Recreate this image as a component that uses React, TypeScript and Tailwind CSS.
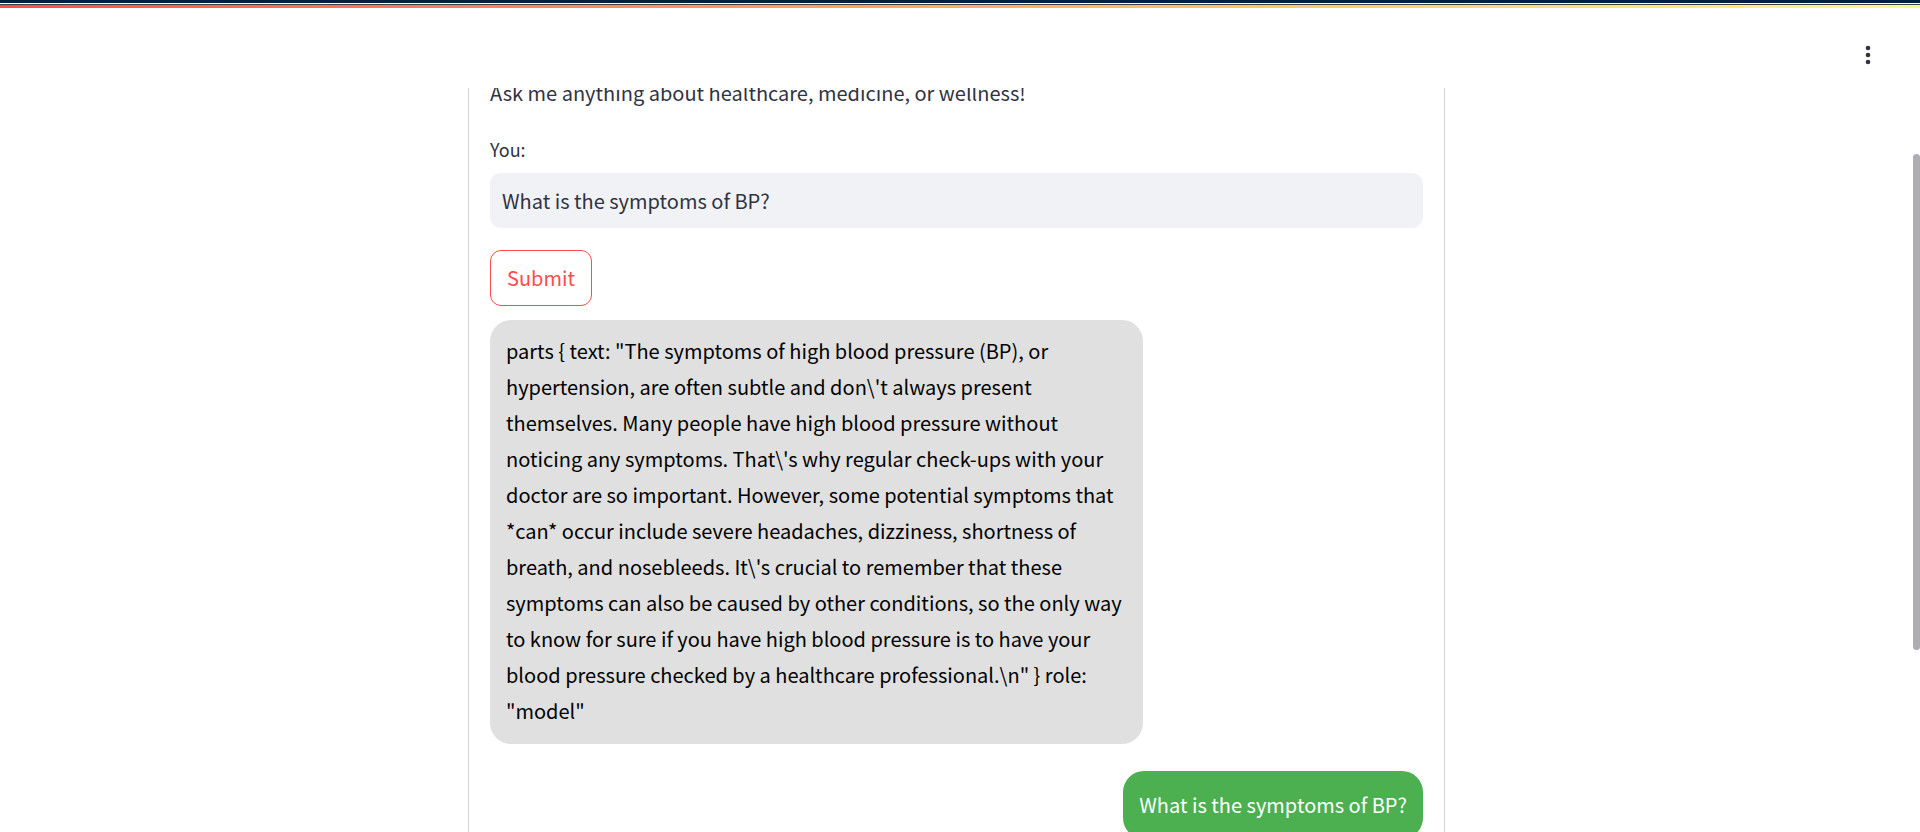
import { useState } from "react";

const reply = String.raw`parts { text: "The symptoms of high blood pressure (BP), or hypertension, are often subtle and don\'t always present themselves. Many people have high blood pressure without noticing any symptoms. That\'s why regular check-ups with your doctor are so important. However, some potential symptoms that *can* occur include severe headaches, dizziness, shortness of breath, and nosebleeds. It\'s crucial to remember that these symptoms can also be caused by other conditions, so the only way to know for sure if you have high blood pressure is to have your blood pressure checked by a healthcare professional.\n" } role: "model"`;

export default function App() {
  const [question, setQuestion] = useState("What is the symptoms of BP?");

  return (
    <div className="flex h-screen flex-col overflow-hidden bg-white font-['Source_Sans_Pro','Noto_Sans_CJK_SC',sans-serif] text-[20px] leading-9 text-[#31333f]">
      <div className="h-[3px] shrink-0 bg-[#02203f]" />
      <div className="mt-px h-px shrink-0 bg-[#3c4043]" />
      <div className="h-[3px] shrink-0 bg-linear-to-r from-[#ff4b4b] to-[#fffd80]" />

      <div className="flex min-h-0 flex-1">
        <div className="flex min-w-0 flex-1 flex-col">
          <header className="flex h-20 shrink-0 items-center justify-end pr-8">
            <button type="button" aria-label="Main menu" className="flex size-[27px] items-center justify-center pt-[14px]">
              <svg viewBox="0 0 8 20" className="h-5 w-2 shrink-0" fill="#31333f" aria-hidden="true">
                <circle cx="4" cy="3" r="2.3" />
                <circle cx="4" cy="10" r="2.3" />
                <circle cx="4" cy="17" r="2.3" />
              </svg>
            </button>
          </header>

          <main className="min-h-0 flex-1 overflow-hidden">
            <div className="mx-auto min-h-full w-full max-w-[977px] border-x border-[#d3d3d3] px-[21px]">
              <p className="-mt-[13px]">Ask me anything about healthcare, medicine, or wellness!</p>

              <form onSubmit={(event) => event.preventDefault()} className="mt-6 flex flex-col items-start">
                <label htmlFor="question" className="text-[18px] leading-7">
                  You:
                </label>
                <input
                  id="question"
                  type="text"
                  value={question}
                  onChange={(event) => setQuestion(event.target.value)}
                  className="mt-[10px] h-[55px] w-full rounded-[11px] bg-[#f0f2f6] px-3 outline-none"
                />
                <button
                  type="submit"
                  className="mt-[22px] h-14 rounded-[11px] border border-[#ff4b4b] px-4 text-[#ff4b4b]"
                >
                  Submit
                </button>
              </form>

              <div className="mt-[14px] flex flex-col gap-[27px]">
                <p className="w-[70%] self-start rounded-[21px] bg-[#e0e0e0] px-4 pt-[13px] pb-[15px] text-black">{reply}</p>
                <p className="self-end rounded-[21px] bg-[#4caf50] px-4 py-4 text-white">
                  What is the symptoms of BP?
                </p>
              </div>
            </div>
          </main>
        </div>

        <div className="w-[7px] shrink-0 pt-[146px]">
          <div className="h-[496px] rounded-full bg-[#adadb2]" />
        </div>
      </div>
    </div>
  );
}
